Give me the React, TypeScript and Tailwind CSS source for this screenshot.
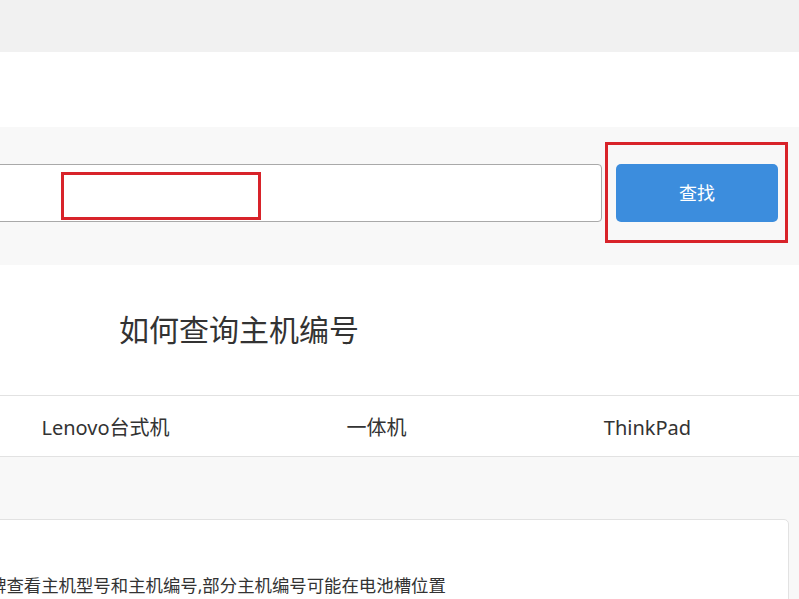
import React from "react";

const tabs = ["Lenovo台式机", "一体机", "ThinkPad"];

export default function App() {
  return (
    <div
      className="w-[799px] h-[599px] overflow-hidden bg-white text-[#333]"
      style={{ fontFamily: '"Noto Sans", "Noto Sans CJK SC", sans-serif' }}
    >
      {/* top strip */}
      <div className="h-[52px] bg-[#f1f1f1]" />
      <div className="h-[75px] bg-white" />

      {/* search band */}
      <div className="h-[138px] bg-[#f8f8f8] pt-[37px]">
        <div className="flex items-start">
          <div className="relative -ml-[20px] w-[622px] h-[58px] shrink-0 rounded-[4px] border border-[#a9a9a9] bg-white">
            <div className="absolute left-[80px] top-[7px] w-[200px] h-[48px] border-[3px] border-[#d8232a]" />
          </div>
          <div className="relative ml-[14px]">
            <button className="w-[162px] h-[58px] rounded-[5px] bg-[#3c8ddd] text-white text-[18px]">
              查找
            </button>
            <div className="absolute -left-[11px] -top-[22px] w-[183px] h-[101px] border-[3px] border-[#d8232a]" />
          </div>
        </div>
      </div>

      {/* heading */}
      <div className="h-[130px] flex items-center pl-[119px]">
        <h1 className="text-[30px] leading-none">如何查询主机编号</h1>
      </div>

      {/* tabs */}
      <div className="h-[62px] border-y border-[#e2e2e2] flex items-center pt-[3px]">
        <div className="flex -ml-[30px]">
          {tabs.map((t) => (
            <div key={t} className="w-[271px] text-center text-[20px]">
              {t}
            </div>
          ))}
        </div>
      </div>

      {/* content */}
      <div className="bg-[#f8f8f8] pt-[62px] h-[200px]">
        <div className="-ml-[40px] w-[829px] h-[200px] rounded-[5px] border border-[#e2e2e2] bg-white pt-[52px] pl-[28px]">
          <p className="text-[17.4px] leading-[26px] whitespace-nowrap">
            牌查看主机型号和主机编号,部分主机编号可能在电池槽位置
          </p>
        </div>
      </div>
    </div>
  );
}
